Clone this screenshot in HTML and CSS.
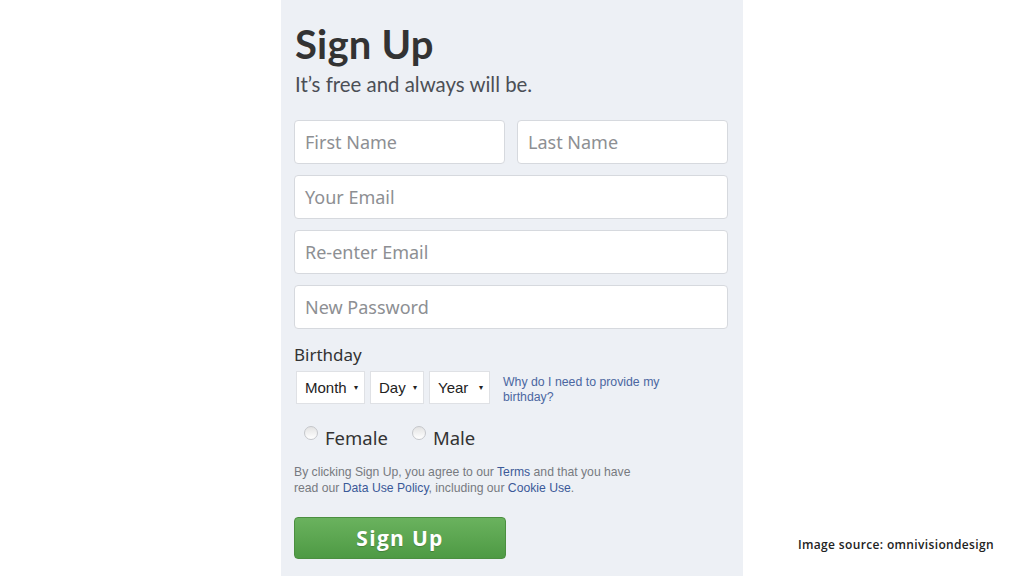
FILE: index.html
```html
<!DOCTYPE html>
<html>
<head>
<meta charset="utf-8">
<link rel="stylesheet" href="styles.css">
</head>
<body>
<div class="page">
  <div class="panel">
    <h1 class="title">Sign Up</h1>
    <p class="subtitle">It’s free and always will be.</p>
    <div class="fields">
      <div class="row">
        <div class="input">First Name</div>
        <div class="input">Last Name</div>
      </div>
      <div class="input">Your Email</div>
      <div class="input">Re-enter Email</div>
      <div class="input">New Password</div>
    </div>
    <div class="label">Birthday</div>
    <div class="birthday">
      <div class="select sel-month">Month <span class="arrow">▾</span></div>
      <div class="select sel-day">Day <span class="arrow">▾</span></div>
      <div class="select sel-year">Year <span class="arrow">▾</span></div>
      <a class="why">Why do I need to provide my birthday?</a>
    </div>
    <div class="gender">
      <label class="radio"><span class="dot"></span>Female</label>
      <label class="radio"><span class="dot"></span>Male</label>
    </div>
    <p class="terms">By clicking Sign Up, you agree to our <a>Terms</a> and that you have<br>read our <a>Data Use Policy</a>, including our <a>Cookie Use</a>.</p>
    <div class="button">Sign Up</div>
  </div>
  <div class="source">Image source: omnivisiondesign</div>
</div>
</body>
</html>
```
FILE: styles.css
```css
html, body {
  margin: 0;
  padding: 0;
  background: #ffffff;
}
.page {
  width: 1024px;
  height: 576px;
  display: flex;
  align-items: flex-start;
  position: relative;
  overflow: hidden;
}
.panel {
  margin-left: 281px;
  width: 434px;
  height: 576px;
  padding: 0 15px 0 13px;
  background: #edf0f5;
  display: flex;
  flex-direction: column;
  font-family: "Noto Sans", sans-serif;
}
.title {
  margin: 20px 0 0 1px;
  font-family: Lato, sans-serif;
  font-weight: 700;
  font-size: 40px;
  line-height: 48px;
  color: #333333;
  letter-spacing: 0.2px;
}
.subtitle {
  margin: 3px 0 0 1px;
  font-family: Lato, sans-serif;
  font-size: 20.4px;
  line-height: 26px;
  color: #4b4f56;
}
.fields {
  margin-top: 23px;
  display: flex;
  flex-direction: column;
  gap: 11px;
}
.row {
  display: flex;
  gap: 12px;
}
.row .input {
  flex: 1;
}
.input {
  box-sizing: border-box;
  height: 44px;
  border: 1px solid #d6d9de;
  border-radius: 4px;
  background: #ffffff;
  padding: 0 10px;
  display: flex;
  align-items: center;
  font-size: 18px;
  color: #8d8f93;
}
.label {
  margin-top: 15px;
  font-size: 17px;
  line-height: 22px;
  color: #333333;
}
.birthday {
  margin-top: 5px;
  display: flex;
  align-items: flex-start;
  padding-left: 2px;
}
.select {
  height: 33px;
  box-sizing: border-box;
  background: #ffffff;
  border: 1px solid #dfe1e5;
  display: flex;
  align-items: center;
  padding: 0 6px 0 8px;
  font-family: "Liberation Sans", sans-serif;
  font-size: 15px;
  color: #222222;
  margin-right: 5px;
  justify-content: space-between;
}
.sel-month { width: 69px; }
.sel-day { width: 54px; }
.sel-year { width: 61px; }
.arrow {
  font-size: 8px;
  color: #222;
}
.why {
  margin-left: 8px;
  margin-top: 4px;
  width: 170px;
  font-family: "Liberation Sans", sans-serif;
  font-size: 12.3px;
  line-height: 15px;
  color: #4b67a1;
}
.gender {
  margin-top: 20px;
  display: flex;
  gap: 24px;
  padding-left: 10px;
}
.radio {
  display: flex;
  align-items: center;
  font-size: 18.5px;
  color: #333333;
}
.dot {
  width: 12px;
  height: 12px;
  border-radius: 50%;
  border: 1px solid #c5c7cb;
  background: linear-gradient(#e3e3e3, #ffffff);
  margin-right: 7px;
  position: relative;
  top: -5px;
}
.terms {
  margin: 14px 0 0 0;
  width: 360px;
  font-family: "Liberation Sans", sans-serif;
  font-size: 12.2px;
  line-height: 16px;
  color: #777a80;
}
.terms a {
  color: #3b5998;
}
.button {
  margin-top: 21px;
  width: 212px;
  height: 42px;
  box-sizing: border-box;
  border: 1px solid #4b8f40;
  border-radius: 4px;
  background: linear-gradient(#6ab25e, #4e9a44);
  color: #ffffff;
  font-family: "Open Sans", sans-serif;
  font-weight: 700;
  font-size: 21px;
  letter-spacing: 1.3px;
  display: flex;
  align-items: center;
  justify-content: center;
  text-shadow: 0 1px 1px rgba(0,0,0,0.2);
}
.source {
  position: absolute;
  left: 798px;
  top: 536px;
  font-family: "Open Sans", sans-serif;
  font-weight: 600;
  font-size: 12px;
  letter-spacing: 0.35px;
  color: #222222;
}
```
